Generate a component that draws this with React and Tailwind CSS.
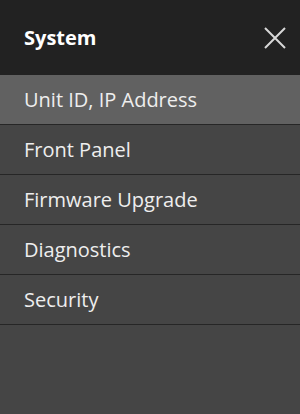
import React from 'react';

const items = ['Unit ID, IP Address', 'Front Panel', 'Firmware Upgrade', 'Diagnostics', 'Security'];

export default function App() {
    return (
        <div className="w-[300px] h-[414px] bg-[#454545] flex flex-col" style={{ fontFamily: '"Open Sans", sans-serif' }}>
            <div className="h-[75px] bg-[#222222] flex items-center justify-between pl-6 pr-[13px] shrink-0">
                <span className="text-white font-bold text-[20px]">System</span>
                <button className="w-6 h-6 flex items-center justify-center">
                    <svg width="22" height="22" viewBox="0 0 22 22" fill="none" stroke="#d8d8d8" strokeWidth="2">
                        <path d="M1 1 L21 21 M21 1 L1 21" />
                    </svg>
                </button>
            </div>
            <ul>
                {items.map((item, i) => (
                    <li
                        key={item}
                        className={
                            'h-[50px] flex items-center pl-6 border-b border-[#262626] text-[20px] text-[#eeeeee] ' +
                            (i === 0 ? 'bg-[#616161]' : '')
                        }
                    >
                        {item}
                    </li>
                ))}
            </ul>
        </div>
    );
}
